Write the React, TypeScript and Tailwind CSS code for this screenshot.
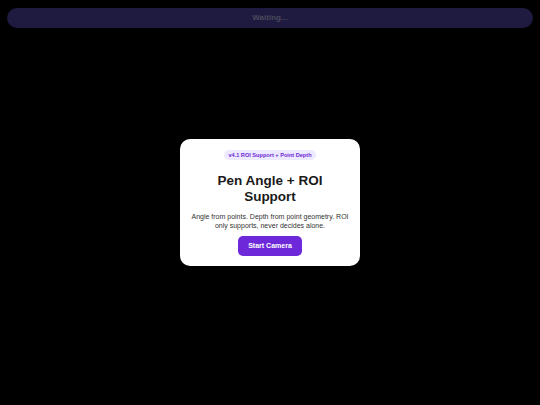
export default function App() {
  return (
    <div className="relative h-[405px] w-full overflow-hidden bg-black font-['Liberation_Sans',Arial,sans-serif]">
      <div className="absolute left-[7px] right-[7px] top-[8px] flex h-[20px] items-center justify-center rounded-full bg-[#1e1a40]">
        <span className="text-[8px] font-bold text-[#4a4a5c]">Waiting...</span>
      </div>

      <div className="flex h-full items-center justify-center">
        <div className="flex w-[180px] flex-col items-center rounded-[10px] bg-white px-[10px] pb-[10px] pt-[11px] text-center">
          <span className="flex h-[10px] items-center rounded-full bg-[#ede9fe] px-[4px] text-[5.6px] font-bold text-[#6d28d9]">
            v4.1 ROI Support + Point Depth
          </span>
          <h1 className="mt-[13px] text-[13.5px] font-bold leading-[15.5px] text-[#1a1a1a]">
            Pen Angle + ROI
            <br />
            Support
          </h1>
          <p className="mt-[9px] text-[7px] leading-[8.4px] text-[#333333]">
            Angle from points. Depth from point geometry. ROI only supports, never decides alone.
          </p>
          <button className="mt-[6px] h-[20px] w-[64px] rounded-[5px] bg-[#6d28d9] text-[7px] font-bold text-white">
            Start Camera
          </button>
        </div>
      </div>
    </div>
  )
}
